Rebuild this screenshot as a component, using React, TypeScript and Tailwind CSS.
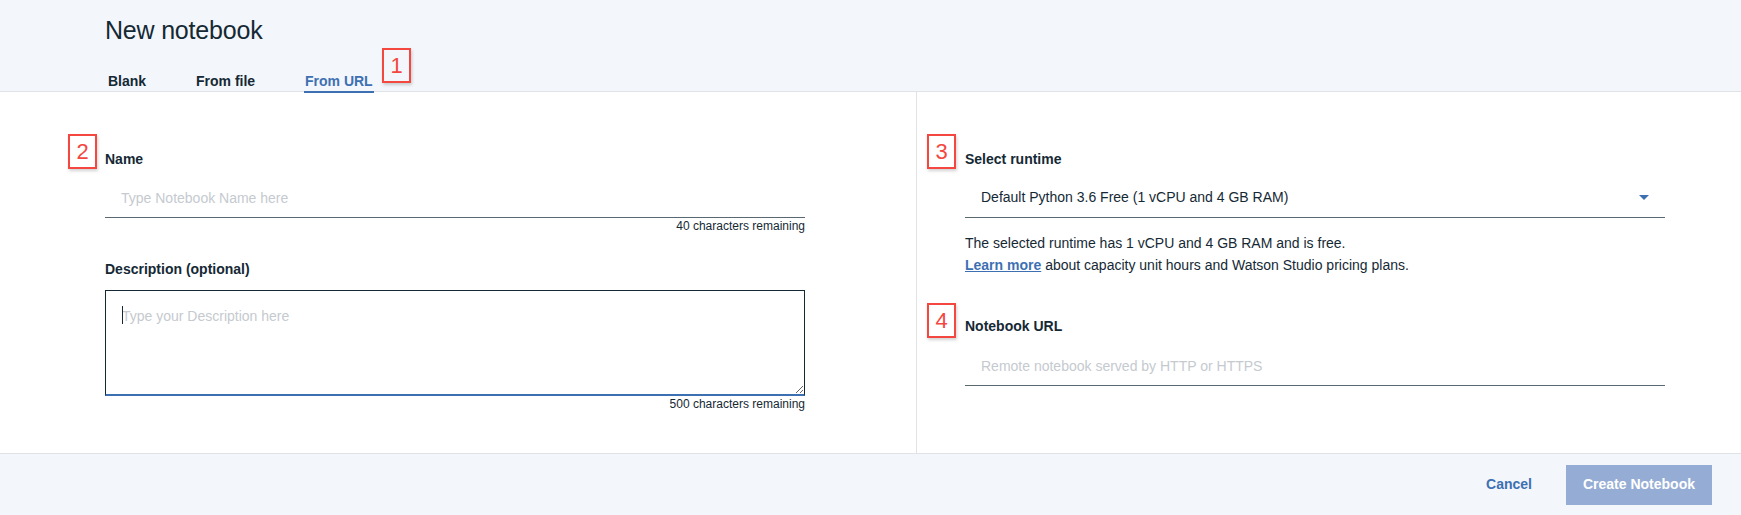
import { type ReactNode } from 'react';

function Marker({ n, className }: { n: string; className: string }) {
    return (
        <div
            className={`absolute flex h-[35px] w-[29px] items-center justify-center border-2 border-[#f4473f] bg-transparent text-[22px] leading-none text-[#f4473f] shadow-[1px_2px_3px_rgba(0,0,0,0.18)] ${className}`}
        >
            {n}
        </div>
    );
}

function Label({ children }: { children: ReactNode }) {
    return (
        <label className="block text-[14px] leading-[18px] font-semibold text-[#152935]">
            {children}
        </label>
    );
}

function Counter({ children }: { children: ReactNode }) {
    return (
        <div className="text-right text-[12px] leading-4 text-[#152935]">
            {children}
        </div>
    );
}

export default function App() {
    return (
        <div className="flex h-[515px] w-[1741px] flex-col overflow-hidden bg-white font-['Liberation_Sans',Arial,sans-serif] text-[#152935]">
            {/* Header */}
            <div className="relative h-[92px] shrink-0 border-b border-[#dfe3e6] bg-[#f3f6fa] pl-[105px]">
                <h1 className="pt-[14px] text-[25px] leading-8 font-normal tracking-[-0.2px] text-[#152935]">
                    New notebook
                </h1>
                <div className="mt-[26px] flex pl-[3px] text-[14px] leading-[18px] font-semibold">
                    <div className="w-[88px] text-[#152935]">Blank</div>
                    <div className="w-[109px] text-[#152935]">From file</div>
                    <div className="-ml-px border-b-2 border-[#3d70b2] px-px pb-[1px] text-[#3d70b2]">
                        From URL
                    </div>
                </div>
                <Marker n="1" className="top-[48px] left-[382px]" />
            </div>

            {/* Body */}
            <div className="flex flex-1">
                {/* Left column */}
                <div className="w-[917px] shrink-0 border-r border-[#dfe3e6] pt-[58px] pl-[105px]">
                    <div className="w-[700px]">
                        <div className="relative">
                            <Label>Name</Label>
                            <Marker n="2" className="-top-[16px] -left-[37px]" />
                        </div>
                        <input
                            type="text"
                            placeholder="Type Notebook Name here"
                            className="mt-[10px] block h-10 w-full border-b border-[#5a6872] bg-transparent px-4 text-[14px] text-[#152935] outline-none placeholder:text-[#c5cacf]"
                        />
                        <Counter>40 characters remaining</Counter>

                        <div className="mt-[26px]">
                            <Label>Description (optional)</Label>
                        </div>
                        <div className="relative mt-3">
                            <textarea
                                placeholder="Type your Description here"
                                className="block h-[106px] w-full resize-y border border-b-2 border-[#152935] border-b-[#3d70b2] bg-white px-4 pt-4 text-[14px] leading-[18px] text-[#152935] outline-none placeholder:text-[#c5cacf]"
                            />
                            <span className="absolute top-[16px] left-[17px] h-[18px] w-px bg-[#152935]" />
                        </div>
                        <Counter>500 characters remaining</Counter>
                    </div>
                </div>

                {/* Right column */}
                <div className="flex-1 pt-[58px] pl-[48px]">
                    <div className="w-[700px]">
                        <div className="relative">
                            <Label>Select runtime</Label>
                            <Marker n="3" className="-top-[16px] -left-[38px]" />
                        </div>
                        <div className="mt-[10px] flex h-10 items-center justify-between border-b border-[#5a6872] pr-[16px] pl-4 text-[14px] text-[#152935]">
                            <span>Default Python 3.6 Free (1 vCPU and 4 GB RAM)</span>
                            <svg width="10" height="5" viewBox="0 0 10 5">
                                <path d="M0 0h10L5 5z" fill="#3d70b2" />
                            </svg>
                        </div>
                        <p className="mt-[14px] text-[14px] leading-[22px] text-[#152935]">
                            The selected runtime has 1 vCPU and 4 GB RAM and is free.
                            <br />
                            <a className="font-semibold text-[#3d70b2] underline">
                                Learn more
                            </a>{' '}
                            about capacity unit hours and Watson Studio pricing plans.
                        </p>

                        <div className="relative mt-[41px]">
                            <Label>Notebook URL</Label>
                            <Marker n="4" className="-top-[14px] -left-[38px]" />
                        </div>
                        <input
                            type="text"
                            placeholder="Remote notebook served by HTTP or HTTPS"
                            className="mt-[11px] block h-10 w-full border-b border-[#5a6872] bg-transparent px-4 text-[14px] text-[#152935] outline-none placeholder:text-[#c5cacf]"
                        />
                    </div>
                </div>
            </div>

            {/* Footer */}
            <div className="flex h-[62px] shrink-0 items-center justify-end gap-[34px] border-t border-[#dfe3e6] bg-[#f3f6fa] pr-[29px]">
                <button className="text-[14px] font-semibold text-[#3d70b2]">
                    Cancel
                </button>
                <button className="h-10 w-[146px] bg-[#95add4] text-[14px] font-semibold text-white">
                    Create Notebook
                </button>
            </div>
        </div>
    );
}
